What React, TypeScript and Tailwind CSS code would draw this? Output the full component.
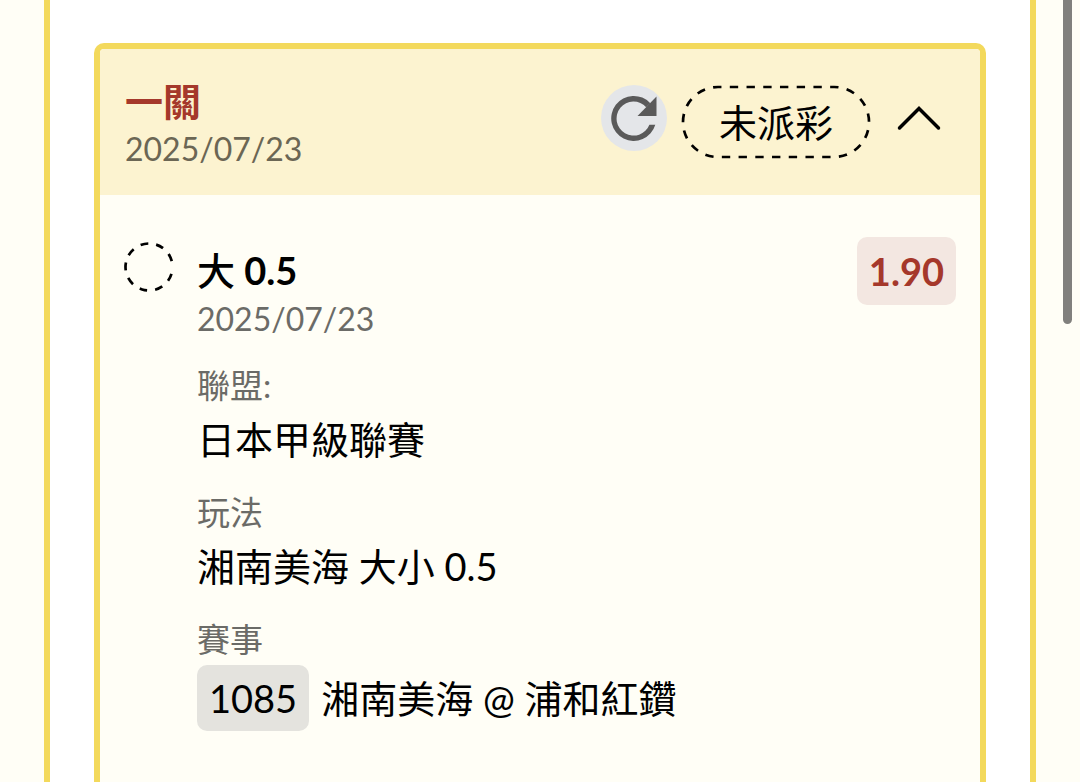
import type { ReactNode } from "react";

function RefreshIcon() {
  return (
    <svg viewBox="0 0 66 66" className="size-full" aria-hidden="true">
      <path
        d="M54.300 39.800H48.400A17 17 0 1 1 45.200 22.200L49.300 18.200A22.500 22.500 0 1 0 54.300 39.800Z"
        fill="#5a5a5a"
      />
      <path d="M55.500 11.500V31H36.500Z" fill="#5a5a5a" />
    </svg>
  );
}

function ChevronUp() {
  return (
    <svg viewBox="0 0 44 26" className="h-[26px] w-11" fill="none" aria-hidden="true">
      <path d="M2.500 23L22 3.500L41.500 23" stroke="#000" strokeWidth="3.500" strokeLinecap="round" />
    </svg>
  );
}

function PendingMark() {
  return (
    <svg viewBox="1 1 50 50" className="size-[50px]" fill="none" aria-hidden="true">
      <circle
        cx="26"
        cy="26"
        r="23.500"
        stroke="#000"
        strokeWidth="2.700"
        transform="rotate(17 26 26)"
        pathLength="150.800"
        strokeDasharray="8 8.200 8 8.200 8 8.200 8 8.200 8 8.200 8 8.200 8 8.200 8 8.200 8 13.200"
      />
    </svg>
  );
}

function StatusPill({ children }: { children: ReactNode }) {
  return (
    <span className="relative flex h-[74px] w-[190px] items-center justify-center text-[38px] leading-[56px]">
      <svg viewBox="0 0 190 74" className="absolute inset-0 size-full" fill="none" aria-hidden="true">
        <rect
          x="2"
          y="2"
          width="186"
          height="70"
          rx="35"
          stroke="#000"
          strokeWidth="2.700"
          pathLength="459"
          strokeDasharray="8.500 8.500"
          strokeDashoffset="5"
        />
      </svg>
      {children}
    </span>
  );
}

function Field({ label, children }: { label: string; children: ReactNode }) {
  return (
    <div>
      <dt className="text-[33px] leading-[52px] text-[#6b6b67]">{label}</dt>
      <dd className="text-[38px] leading-[56px]">{children}</dd>
    </div>
  );
}

export default function App() {
  return (
    <div
      lang="zh-Hant"
      className="relative flex min-h-screen bg-[#fffef6] px-11 font-['Lato','Noto_Sans_CJK_TC',sans-serif] text-black"
    >
      <main className="flex flex-1 flex-col border-x-6 border-[#f3d95c] bg-white px-11 pt-[43px]">
        <article className="flex flex-1 flex-col rounded-t-[10px] border-6 border-b-0 border-[#f3d95c] bg-[#fffef6]">
          <header className="flex items-start justify-between rounded-t-[4px] bg-[#fcf3d0] px-[25px] pt-7 pb-[22px]">
            <div>
              <h1 className="text-[38px] leading-[48px] font-bold text-[#a5382b]">一關</h1>
              <p className="text-[32px] leading-[48px] text-[#6b6654]">2025/07/23</p>
            </div>
            <div className="flex items-start gap-[14px] pt-2 pr-[14px]">
              <button
                type="button"
                aria-label="重新整理"
                className="size-[66px] rounded-full bg-[#e4e6e9]"
              >
                <RefreshIcon />
              </button>
              <StatusPill>未派彩</StatusPill>
              <button type="button" aria-label="收合" className="ml-3 flex h-[66px] items-center">
                <ChevronUp />
              </button>
            </div>
          </header>

          <section className="flex items-start px-6 pt-[42px]">
            <div className="flex h-[60px] w-[73px] shrink-0 items-center">
              <PendingMark />
            </div>
            <div className="flex-1">
              <h2 className="text-[38px] leading-[66px] font-bold">
                <span className="font-medium">大</span> 0.5
              </h2>
              <p className="text-[32px] leading-8 text-[#6b6b67]">2025/07/23</p>
              <dl className="mt-6 flex flex-col gap-[19px]">
                <Field label="聯盟:">日本甲級聯賽</Field>
                <Field label="玩法">湘南美海 大小 0.5</Field>
                <Field label="賽事">
                  <span className="flex items-center gap-3">
                    <span className="rounded-[10px] bg-[#e4e3de] px-3 leading-[66px]">1085</span>
                    <span>湘南美海 @ 浦和紅鑽</span>
                  </span>
                </Field>
              </dl>
            </div>
            <span className="rounded-[10px] bg-[#f3e7e1] px-3 text-[38px] leading-[68px] font-bold text-[#a5382b]">
              1.90
            </span>
          </section>
        </article>
      </main>
      <div className="absolute top-0 right-2 h-[324px] w-[9px] rounded-b-full bg-[#81807d]" />
    </div>
  );
}
